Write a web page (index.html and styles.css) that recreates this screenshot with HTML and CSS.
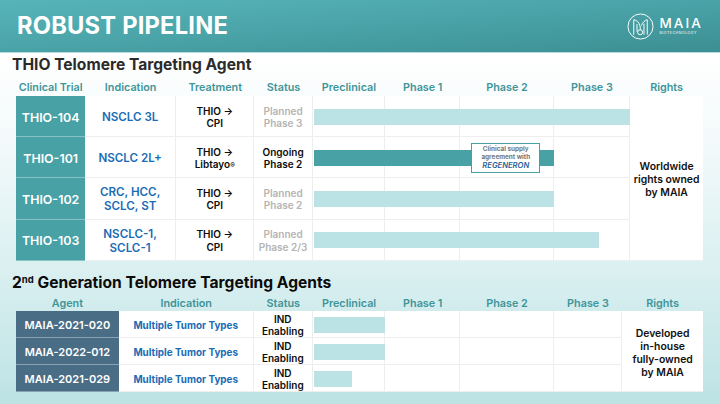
FILE: index.html
```html
<!DOCTYPE html>
<html lang="en">
<head>
<meta charset="utf-8">
<title>Robust Pipeline</title>
<link rel="stylesheet" href="styles.css">
</head>
<body>
<header class="banner">
  <h1>ROBUST PIPELINE</h1>
  <div class="logo">
    <svg class="logo-mark" viewBox="0 0 28 28" width="27" height="27" fill="none" stroke="#fff" stroke-width="1">
      <circle cx="14" cy="14" r="13"/>
      <path d="M7 7V22.5M21 7V22.5M7 7C10 7 12.6 10 13.4 13.2C13.9 15 13.9 16.4 13.7 17.6M21 7C18.6 7.4 16.2 9.6 15 13"/>
      <path d="M17.6 11V22.5"/>
      <path d="M10.4 11.5V19.5"/>
      <circle cx="13.6" cy="20" r="2.6"/>
    </svg>
    <div class="logo-text">
      <span class="logo-name">MAIA</span>
      <span class="logo-sub">BIOTECHNOLOGY</span>
    </div>
  </div>
</header>
<main class="content">
  <h2 class="section-title first">THIO Telomere Targeting Agent</h2>
  <section class="grid grid-thio">
    <div class="head">Clinical Trial</div><div class="head">Indication</div><div class="head">Treatment</div><div class="head">Status</div><div class="head">Preclinical</div><div class="head">Phase 1</div><div class="head">Phase 2</div><div class="head">Phase 3</div><div class="head">Rights</div>

    <div class="cell id teal">THIO-104</div><div class="cell ind">NSCLC 3L</div><div class="cell txt">THIO →<br>CPI</div><div class="cell txt muted">Planned<br>Phase 3</div>
    <div class="track"><div class="cell"></div><div class="cell"></div><div class="cell"></div><div class="cell"></div><div class="bar light" style="width:316.8px"></div></div>
    <div class="cell rights rights-thio">Worldwide<br>rights owned<br>by MAIA</div>

    <div class="cell id teal">THIO-101</div><div class="cell ind">NSCLC 2L+</div><div class="cell txt"><div>THIO →<br>Libtayo<span class="reg">®</span></div></div><div class="cell txt">Ongoing<br>Phase 2</div>
    <div class="track"><div class="cell"></div><div class="cell"></div><div class="cell"></div><div class="cell"></div><div class="bar dark" style="width:240.2px"></div>
      <div class="callout">
        <span>Clinical supply</span>
        <span>agreement with</span>
        <strong>REGENERON</strong>
      </div>
    </div>

    <div class="cell id teal">THIO-102</div><div class="cell ind">CRC, HCC,<br>SCLC, ST</div><div class="cell txt">THIO →<br>CPI</div><div class="cell txt muted">Planned<br>Phase 2</div>
    <div class="track"><div class="cell"></div><div class="cell"></div><div class="cell"></div><div class="cell"></div><div class="bar light" style="width:240.2px"></div></div>

    <div class="cell id teal">THIO-103</div><div class="cell ind">NSCLC-1,<br>SCLC-1</div><div class="cell txt">THIO →<br>CPI</div><div class="cell txt muted">Planned<br>Phase 2/3</div>
    <div class="track"><div class="cell"></div><div class="cell"></div><div class="cell"></div><div class="cell"></div><div class="bar light" style="width:285.5px"></div></div>
  </section>

  <h2 class="section-title second">2<sup class="ord">nd</sup> Generation Telomere Targeting Agents</h2>
  <section class="grid grid-maia">
    <div class="head">Agent</div><div class="head">Indication</div><div class="head">Status</div><div class="head">Preclinical</div><div class="head">Phase 1</div><div class="head">Phase 2</div><div class="head">Phase 3</div><div class="head">Rights</div>

    <div class="cell id navy">MAIA-2021-020</div><div class="cell ind small">Multiple Tumor Types</div><div class="cell txt">IND<br>Enabling</div>
    <div class="track"><div class="cell"></div><div class="cell"></div><div class="cell"></div><div class="cell"></div><div class="bar light" style="width:71.3px"></div></div>
    <div class="cell rights rights-maia">Developed<br>in-house<br>fully-owned<br>by MAIA</div>

    <div class="cell id navy">MAIA-2022-012</div><div class="cell ind small">Multiple Tumor Types</div><div class="cell txt">IND<br>Enabling</div>
    <div class="track"><div class="cell"></div><div class="cell"></div><div class="cell"></div><div class="cell"></div><div class="bar light" style="width:71.3px"></div></div>

    <div class="cell id navy">MAIA-2021-029</div><div class="cell ind small">Multiple Tumor Types</div><div class="cell txt">IND<br>Enabling</div>
    <div class="track"><div class="cell"></div><div class="cell"></div><div class="cell"></div><div class="cell"></div><div class="bar light" style="width:38.5px"></div></div>
  </section>
</main>
</body>
</html>
```
FILE: styles.css
```css
* { box-sizing: border-box; }
html, body { margin: 0; padding: 0; }
body {
  width: 720px;
  height: 404px;
  overflow: hidden;
  font-family: Inter, "Noto Sans", sans-serif;
  background: linear-gradient(180deg, #ffffff 14%, #f1f9fa 38%, #d9eff0 68%, #bde3e5 100%);
}
.banner {
  height: 53px;
  padding: 0 17px 0 17px;
  display: flex;
  align-items: center;
  justify-content: space-between;
  background: linear-gradient(176deg, #56b5ba 0%, #479fa3 60%, #3c8f93 100%);
  border-bottom: 1px solid #b5dcde;
}
.banner h1 {
  margin: 0 0 1px;
  font-size: 23.7px;
  font-weight: 700;
  letter-spacing: 0.2px;
  color: #fff;
}
.logo { display: flex; align-items: center; gap: 5px; margin-top: 1px; }
.logo-mark { display: block; }
.logo-text { display: flex; flex-direction: column; align-items: flex-start; color: #fff; }
.logo-name { font-size: 13.5px; line-height: 13px; font-weight: 500; letter-spacing: 2.1px; }
.logo-sub { font-size: 3.6px; line-height: 6px; letter-spacing: 0.5px; }
.content { padding-left: 12px; }
.section-title {
  margin: 0;
  font-size: 15.6px;
  line-height: 20px;
  font-weight: 700;
  color: #2b2b2b;
}
.section-title.first { margin-top: 2px; margin-bottom: 3px; }
.section-title.second { color: #0b0b0b; margin-top: 12px; margin-bottom: 1px; }
.ord { font-size: 9.5px; line-height: 0; vertical-align: 5px; }
.grid { display: grid; margin-left: 4px; width: 687px; }
.grid-thio {
  grid-template-columns: 69.3px 90.7px 78.5px 58.2px 72.6px 75px 93.4px 76.6px 72.7px;
  grid-template-rows: 18px 41px 41px 41.5px 41.5px;
}
.grid-maia {
  grid-template-columns: 102.7px 135px 59.2px 72.4px 75px 93.4px 68.6px 80.7px;
  grid-template-rows: 17px 27px 27px 27px;
}
.head {
  display: flex;
  align-items: center;
  justify-content: center;
  font-size: 10.8px;
  font-weight: 600;
  color: #3f9599;
  white-space: nowrap;
}
.grid-maia .head { padding-top: 1px; }
.track { display: grid; position: relative; grid-column: span 4; }
.grid-thio .track { grid-template-columns: 72.6px 75px 93.4px 76.6px; }
.grid-maia .track { grid-template-columns: 72.4px 75px 93.4px 68.6px; }
.cell {
  background: #fff;
  border-right: 1px solid #eeeeee;
  border-bottom: 1px solid #eeeeee;
  display: flex;
  align-items: center;
  justify-content: center;
  text-align: center;
  min-width: 0;
}
.id { font-size: 12.4px; font-weight: 600; color: #fff; border-right: 0; border-bottom: 1px solid rgba(255,255,255,.35); padding-top: 2px; }
.teal { background: #47a1a5; }
.navy { background: #4a6d86; font-size: 11px; padding-top: 1px; }
.ind { font-size: 11.6px; line-height: 14px; font-weight: 600; color: #1a6cb5; padding-top: 2px; }
.ind.small { font-size: 9.9px; font-weight: 700; padding-top: 1px; }
.txt { font-size: 10px; line-height: 12.5px; font-weight: 600; color: #0c0c0c; padding-top: 2px; }
.muted { color: #b4b4b4; }
.reg { font-size: 7px; line-height: 0; }
.rights { font-size: 10.4px; line-height: 13px; font-weight: 600; color: #111; border-right: 0; padding-top: 2px; }
.bar { position: absolute; left: 1px; top: calc(50% - 8px); height: 16px; }
.rights-thio { grid-column: 9; grid-row: 2 / span 4; }
.rights-maia { grid-column: 8; grid-row: 2 / span 3; padding-top: 3px; }
.light { background: #bbe2e4; }
.dark { background: #47a1a5; }
.callout {
  position: absolute;
  left: 158.6px;
  top: 5.5px;
  width: 69px;
  height: 30px;
  background: #fff;
  border: 1.5px solid #4a9fa3;
  display: flex;
  flex-direction: column;
  align-items: center;
  justify-content: center;
  font-size: 6.4px;
  line-height: 8.4px;
  font-weight: 700;
  color: #777;
  white-space: nowrap;
}
.callout strong { font-size: 7.6px; line-height: 8.4px; font-style: italic; font-weight: 600; color: #1f6095; }
```
